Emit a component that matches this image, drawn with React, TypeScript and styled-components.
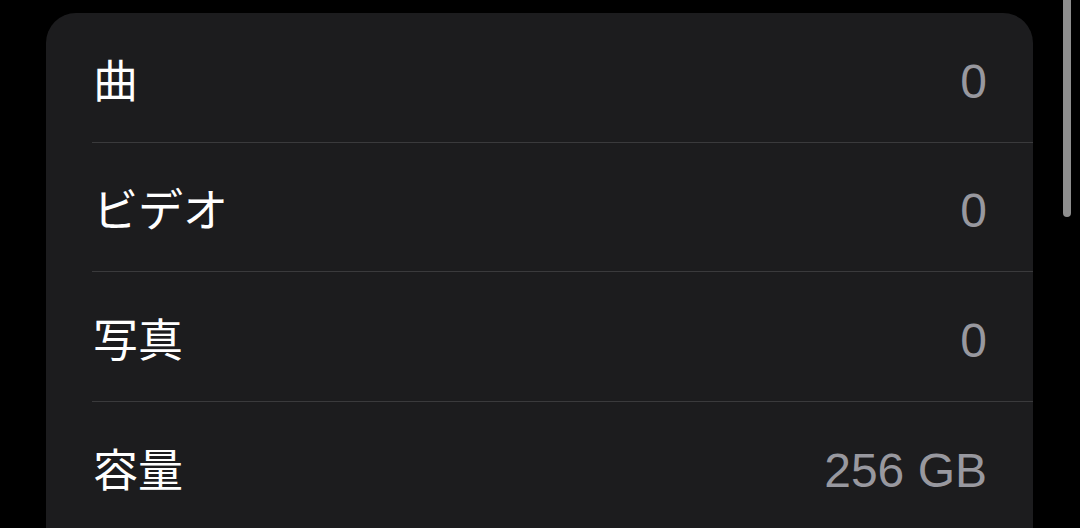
import React from "react";
import styled, { createGlobalStyle } from "styled-components";

const Global = createGlobalStyle`
  html, body { margin: 0; padding: 0; background: #000; }
  body { font-family: "Liberation Sans", "Noto Sans CJK JP", sans-serif; }
`;

const Page = styled.div`
  position: relative;
  width: 1080px;
  height: 528px;
  overflow: hidden;
  background: #000;
  padding: 13px 47px 0 46px;
  box-sizing: border-box;
`;

const Card = styled.div`
  background: #1c1c1e;
  border-radius: 30px;
  padding-left: 46px;
  min-height: 600px;
`;

const Row = styled.div<{ $last?: boolean }>`
  height: 129.5px;
  box-sizing: border-box;
  display: flex;
  align-items: center;
  justify-content: space-between;
  padding: 6px 46px 0 0;
  border-bottom: ${(p) => (p.$last ? "none" : "1px solid #3a3a3c")};
`;

const Label = styled.span`
  color: #ffffff;
  font-size: 45px;
  font-family: "Noto Sans CJK JP", sans-serif;
  line-height: 1;
  margin-top: -4px;
  margin-left: 1px;
`;

const Value = styled.span`
  color: #98989f;
  font-size: 48px;
  font-family: "Liberation Sans", "Noto Sans", sans-serif;
  line-height: 1;
  margin-top: 3px;
`;

const Scrollbar = styled.div`
  position: absolute;
  left: 1063px;
  top: -20px;
  width: 8px;
  height: 237px;
  border-radius: 4px;
  background: #8e8e8e;
`;

const rows = [
  { label: "曲", value: "0" },
  { label: "ビデオ", value: "0" },
  { label: "写真", value: "0" },
  { label: "容量", value: "256 GB" },
];

export default function App() {
  return (
    <>
      <Global />
      <Page>
        <Card>
          {rows.map((r, i) => (
            <Row key={r.label} $last={i === rows.length - 1}>
              <Label>{r.label}</Label>
              <Value>{r.value}</Value>
            </Row>
          ))}
        </Card>
        <Scrollbar />
      </Page>
    </>
  );
}
